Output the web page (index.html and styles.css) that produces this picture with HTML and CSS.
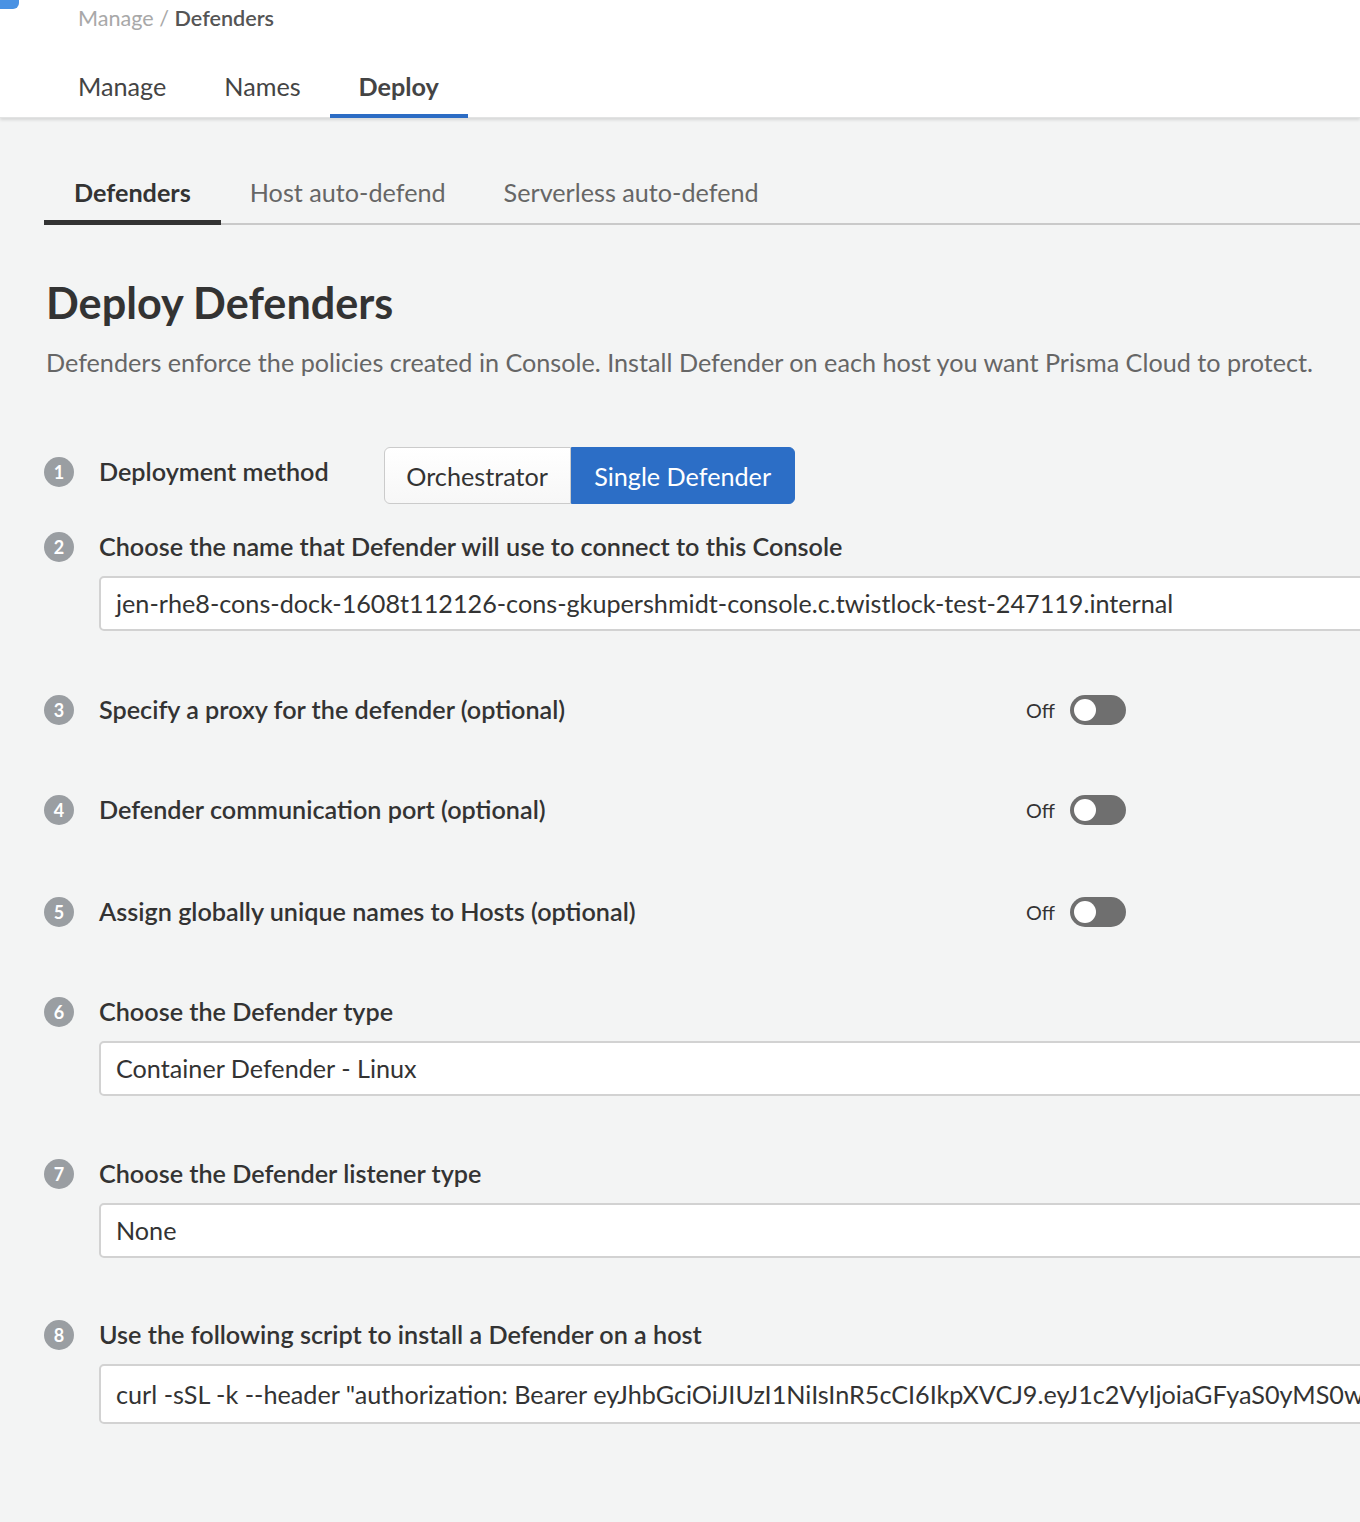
FILE: index.html
```html
<!DOCTYPE html>
<html>
<head>
<meta charset="utf-8">
<link rel="stylesheet" href="styles.css">
</head>
<body>
<div class="corner"></div>
<header class="header">
  <div class="crumbs"><span class="crumb-muted">Manage</span> <span class="crumb-sep">/</span> <span class="crumb-current">Defenders</span></div>
  <nav class="top-tabs">
    <a class="top-tab">Manage</a>
    <a class="top-tab">Names</a>
    <a class="top-tab active">Deploy</a>
  </nav>
</header>
<main class="main">
  <nav class="sub-tabs">
    <a class="sub-tab active">Defenders</a>
    <a class="sub-tab">Host auto-defend</a>
    <a class="sub-tab">Serverless auto-defend</a>
  </nav>
  <h1 class="title">Deploy Defenders</h1>
  <p class="desc">Defenders enforce the policies created in Console. Install Defender on each host you want Prisma Cloud to protect.</p>

  <section class="step step-1">
    <div class="step-row">
      <span class="num">1</span>
      <span class="label">Deployment method</span>
      <div class="btn-group">
        <button class="btn">Orchestrator</button>
        <button class="btn btn-primary">Single Defender</button>
      </div>
    </div>
  </section>

  <section class="step step-2">
    <div class="step-row"><span class="num">2</span><span class="label">Choose the name that Defender will use to connect to this Console</span></div>
    <div class="field">jen-rhe8-cons-dock-1608t112126-cons-gkupershmidt-console.c.twistlock-test-247119.internal</div>
  </section>

  <section class="step step-3">
    <div class="step-row toggle-row"><span class="num">3</span><span class="label">Specify a proxy for the defender (optional)</span>
      <span class="toggle-wrap"><span class="off">Off</span><span class="toggle"><span class="knob"></span></span></span></div>
  </section>

  <section class="step step-4">
    <div class="step-row toggle-row"><span class="num">4</span><span class="label">Defender communication port (optional)</span>
      <span class="toggle-wrap"><span class="off">Off</span><span class="toggle"><span class="knob"></span></span></span></div>
  </section>

  <section class="step step-5">
    <div class="step-row toggle-row"><span class="num">5</span><span class="label">Assign globally unique names to Hosts (optional)</span>
      <span class="toggle-wrap"><span class="off">Off</span><span class="toggle"><span class="knob"></span></span></span></div>
  </section>

  <section class="step step-6">
    <div class="step-row"><span class="num">6</span><span class="label">Choose the Defender type</span></div>
    <div class="field">Container Defender - Linux</div>
  </section>

  <section class="step step-7">
    <div class="step-row"><span class="num">7</span><span class="label">Choose the Defender listener type</span></div>
    <div class="field">None</div>
  </section>

  <section class="step step-8">
    <div class="step-row"><span class="num">8</span><span class="label">Use the following script to install a Defender on a host</span></div>
    <div class="field field-script">curl -sSL -k --header "authorization: Bearer eyJhbGciOiJIUzI1NiIsInR5cCI6IkpXVCJ9.eyJ1c2VyIjoiaGFyaS0yMS0w</div>
  </section>
</main>
</body>
</html>
```

FILE: styles.css
```css
* { box-sizing: border-box; }
html, body {
  margin: 0;
  padding: 0;
  background: #f3f4f4;
  font-family: Lato, "Open Sans", "Liberation Sans", sans-serif;
  color: #333;
  overflow: hidden;
}
body { width: 1360px; min-height: 1522px; position: relative; }
.corner {
  position: absolute;
  left: 0; top: 0;
  width: 19px; height: 9px;
  background: #4a92e3;
  border-bottom-right-radius: 6px;
  z-index: 5;
}
.header {
  background: #fff;
  height: 118px;
  box-shadow: 0 2px 3px rgba(0,0,0,0.12);
  border-bottom: 1px solid #e2e3e3;
  position: relative;
}
.crumbs {
  padding-left: 78px;
  height: 38px;
  line-height: 37px;
  font-size: 21.6px;
}
.crumb-muted { color: #a8a8a8; }
.crumb-sep { color: #a8a8a8; }
.crumb-current { color: #555; font-weight: 600; }
.top-tabs {
  display: flex;
  padding-left: 49px;
  margin-top: 30px;
}
.top-tab {
  font-size: 25.2px;
  color: #444;
  padding: 0 29px;
  height: 50px;
  line-height: 37px;
  border-bottom: 3px solid transparent;
}
.top-tab.active {
  font-weight: 700;
  border-bottom: 4px solid #2c6cc4;
  color: #444;
}
.main { padding: 0 0 0 44px; }
.sub-tabs {
  display: flex;
  margin-top: 42px;
  border-bottom: 2px solid #c9c9c9;
  height: 65px;
}
.sub-tab {
  font-size: 25.2px;
  color: #666;
  padding: 0 29px;
  line-height: 64px;
  height: 65px;
}
.sub-tab.active {
  color: #333;
  font-weight: 700;
  padding: 0 30px;
  border-bottom: 5px solid #333;
  height: 65px;
}
.title {
  font-size: 43.2px;
  font-weight: 700;
  color: #333;
  margin: 52px 0 0 2px;
  line-height: 50px;
}
.desc {
  margin: 20px 0 0 2px;
  font-size: 25.2px;
  color: #666;
  line-height: 30px;
}
.step { position: relative; }
.step-row {
  display: flex;
  align-items: center;
}
.num {
  width: 30px; height: 30px;
  border-radius: 50%;
  background: #9a9ea2;
  color: #fff;
  font-size: 18px;
  font-weight: 700;
  display: flex;
  align-items: center;
  justify-content: center;
  margin-right: 25px;
  flex: none;
}
.label {
  font-size: 25.2px;
  font-weight: 600;
  line-height: 28px;
  padding-bottom: 2px;
  color: #333;
}
.btn-group {
  display: flex;
  margin-left: 55px;
  margin-top: 8px;
}
.btn {
  font-family: inherit;
  font-size: 25.2px;
  height: 57px;
  margin: 0;
  padding: 0;
  border: 1px solid #cbcbcb;
  background: linear-gradient(#fff, #f7f7f7);
  color: #333;
  border-radius: 6px 0 0 6px;
  width: 187px;
}
.btn-primary {
  background: #2c6ec6;
  border-color: #2c6ec6;
  color: #fff;
  border-radius: 0 6px 6px 0;
  width: 224px;
}
.field {
  margin-left: 55px;
  margin-top: 14px;
  width: 1400px;
  height: 55px;
  background: #fff;
  border: 2px solid #d2d2d2;
  border-radius: 5px;
  font-size: 25.2px;
  line-height: 51px;
  padding-left: 15px;
  color: #333;
  white-space: nowrap;
  overflow: hidden;
}
.field-script { height: 60px; line-height: 56px; }
.toggle-row { width: 1082px; }
.toggle-wrap {
  margin-left: auto;
  display: flex;
  align-items: center;
}
.off { font-size: 19.8px; color: #333; margin-right: 15px; }
.toggle {
  width: 56px; height: 30px;
  border-radius: 15px;
  background: #6f6f6f;
  position: relative;
  display: inline-block;
}
.knob {
  position: absolute;
  left: 4px; top: 4px;
  width: 22px; height: 22px;
  border-radius: 50%;
  background: #fff;
}
.step-1 { margin-top: 62px; }
.step-2 { margin-top: 28px; }
.step-3 { margin-top: 64px; }
.step-4 { margin-top: 70px; }
.step-5 { margin-top: 72px; }
.step-6 { margin-top: 70px; }
.step-7 { margin-top: 63px; }
.step-8 { margin-top: 62px; }
```
